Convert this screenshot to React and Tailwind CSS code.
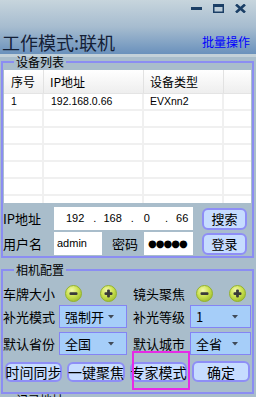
import React from 'react'

const CJK = { fontFamily: '"Noto Sans CJK SC", "Noto Sans", sans-serif' }

function RoundBtn({ plus }) {
  return (
    <svg width="17" height="17" viewBox="0 0 17 17" className="shrink-0">
      <defs>
        <radialGradient id={plus ? 'gp' : 'gm'} cx="0.4" cy="0.3" r="0.75">
          <stop offset="0" stopColor="#f3f8b0" />
          <stop offset="0.5" stopColor="#cde352" />
          <stop offset="1" stopColor="#9cbc2c" />
        </radialGradient>
      </defs>
      <circle cx="8.5" cy="8.5" r="8" fill={`url(#${plus ? 'gp' : 'gm'})`} stroke="#93b132" strokeWidth="1" />
      <rect x="4.5" y="7.2" width="8" height="2.8" rx="1" fill="#3a3a3a" />
      {plus && <rect x="7.1" y="4.6" width="2.8" height="8" rx="1" fill="#3a3a3a" />}
    </svg>
  )
}

function Select({ value, w }) {
  return (
    <div className={`${w} h-[23px] shrink-0 flex items-center justify-between bg-[#a6cef9] border border-[#8484f4] pl-[5px] pr-[12px]`}>
      <span className="text-[13px] text-black leading-none">{value}</span>
      <svg width="6" height="4" viewBox="0 0 6 4"><path d="M0 0h6L3 3.5z" fill="#404a58" /></svg>
    </div>
  )
}

function Btn({ children, w, h = 'h-[20px]', size = 'text-[14px]' }) {
  return (
    <div className={`${w} ${h} ${size} shrink-0 flex items-center justify-center rounded-[6px] border-2 border-[#8e8ef6] bg-[#c6dcff] text-black leading-none whitespace-nowrap overflow-visible`}>
      {children}
    </div>
  )
}

export default function App() {
  const rows = [['1', '192.168.0.66', 'EVXnn2'], ['', '', ''], ['', '', ''], ['', '', ''], ['', '', ''], ['', '', ''], ['', '', '']]
  return (
    <div className="w-[256px] h-[397px] overflow-hidden bg-[#a9bdcb] text-black" style={CJK}>
      {/* Title bar */}
      <div className="h-[54px] bg-gradient-to-b from-[#c7d5dd] via-[#a6bccf] to-[#6a91bc] flex flex-col justify-between">
        <div className="flex justify-end items-start pt-[4px] pr-[10px] gap-[11px]">
          <svg width="11" height="9" viewBox="0 0 11 9"><rect x="0" y="3" width="11" height="3" fill="#1b3f66" /></svg>
          <svg width="11" height="9" viewBox="0 0 11 9"><rect x="0.75" y="0.75" width="9.5" height="7.5" fill="none" stroke="#1b3f66" strokeWidth="1.5" /><rect x="0" y="0" width="11" height="3" fill="#1b3f66" /></svg>
          <svg width="11" height="9" viewBox="0 0 11 9"><path d="M1 0.5L10 8.5M10 0.5L1 8.5" stroke="#1b3f66" strokeWidth="2.6" /></svg>
        </div>
        <div className="flex items-end justify-between pl-[2px] pr-[6px] pb-[2px]">
          <span className="text-[18px] leading-[20px] text-[#142036]">工作模式:联机</span>
          <span className="text-[12px] leading-[16px] text-[#0000ff] mb-[2px]">批量操作</span>
        </div>
      </div>
      <div className="h-[3px] bg-[#c3d1d9]" />

      {/* 设备列表 */}
      <fieldset className="ml-[1px] w-[253px] border-2 border-[#8b8df2] pb-[1px]">
        <legend className="ml-[11px] px-[2px] text-[12px] leading-[10px]">设备列表</legend>
        <div className="mt-[3px] mx-[1px] h-[133px] bg-white overflow-hidden">
          <div className="flex h-[24px] bg-gradient-to-b from-white to-[#eeeeee] border-b border-[#e4e4e4] text-[12px] items-center">
            <div className="w-[40px] h-full flex items-center pl-[7px] border-r border-[#e2e2e2]">序号</div>
            <div className="w-[100px] h-full flex items-center pl-[6px] border-r border-[#e2e2e2]">IP地址</div>
            <div className="w-[80px] h-full flex items-center pl-[6px] border-r border-[#e2e2e2]">设备类型</div>
            <div className="flex-1 h-full" />
          </div>
          {rows.map((r, i) => (
            <div key={i} className="flex h-[17px] border-b-2 border-[#f0f0f0] text-[10.5px] items-center" style={{ fontFamily: '"Liberation Sans", sans-serif' }}>
              <div className="w-[40px] h-full flex items-center pl-[7px] border-r-2 border-[#f0f0f0]">{r[0]}</div>
              <div className="w-[100px] h-full flex items-center pl-[7px] border-r-2 border-[#f0f0f0]">{r[1]}</div>
              <div className="w-[80px] h-full flex items-center pl-[6px] border-r-2 border-[#f0f0f0]">{r[2]}</div>
              <div className="w-[22px] h-full" />
            </div>
          ))}
        </div>

        <div className="flex items-center mt-[4px] h-[23px]">
          <span className="w-[51px] text-[13px] leading-none">IP地址</span>
          <div className="w-[139px] h-[23px] bg-white flex items-center text-[11px] leading-none" style={{ fontFamily: '"Liberation Sans", sans-serif' }}>
            <span className="ml-[12px]">192</span>
            <span className="ml-[9px]">.</span>
            <span className="ml-[7px]">168</span>
            <span className="ml-[9px]">.</span>
            <span className="ml-[10px]">0</span>
            <span className="ml-[15px]">.</span>
            <span className="ml-[8px]">66</span>
          </div>
          <div className="ml-[9px]"><Btn w="w-[45px]" h="h-[22px]" size="text-[13px]">搜索</Btn></div>
        </div>
        <div className="flex items-center mt-[2px] h-[23px]">
          <span className="w-[51px] text-[13px] leading-none">用户名</span>
          <div className="w-[48px] h-[23px] bg-white flex items-center pl-[3px] text-[11px] leading-none" style={{ fontFamily: '"Liberation Sans", sans-serif' }}>admin</div>
          <span className="ml-[10px] w-[32px] text-[13px] leading-none">密码</span>
          <div className="w-[49px] h-[23px] bg-white flex items-center pl-[4px] text-[10px] tracking-[-1px] leading-none" style={{ fontFamily: '"DejaVu Sans", sans-serif' }}>●●●●●</div>
          <div className="ml-[9px]"><Btn w="w-[45px]" h="h-[22px]" size="text-[13px]">登录</Btn></div>
        </div>
      </fieldset>

      {/* 相机配置 */}
      <fieldset className="mt-[7px] ml-[1px] w-[253px] border-2 border-[#8b8df2] pb-[10px]">
        <legend className="ml-[11px] px-[2px] text-[12px] leading-[10px]">相机配置</legend>
        <div className="flex items-center mt-[10px] h-[17px] text-[13px] leading-none">
          <span className="w-[62px]">车牌大小</span>
          <RoundBtn />
          <span className="ml-[18px] flex"><RoundBtn plus /></span>
          <span className="ml-[16px] w-[63px]">镜头聚焦</span>
          <RoundBtn />
          <span className="ml-[16px] flex"><RoundBtn plus /></span>
        </div>
        <div className="flex items-center mt-[3px] text-[13px] leading-none">
          <span className="w-[56px]">补光模式</span>
          <Select value="强制开" w="w-[68px]" />
          <span className="ml-[6px] w-[57px]">补光等级</span>
          <Select value="1" w="w-[61px]" />
        </div>
        <div className="flex items-center mt-[4px] text-[13px] leading-none">
          <span className="w-[56px]">默认省份</span>
          <Select value="全国" w="w-[68px]" />
          <span className="ml-[6px] w-[57px]">默认城市</span>
          <Select value="全省" w="w-[61px]" />
        </div>
        <div className="flex items-center mt-[6px] pl-[2px] gap-[5px]">
          <Btn w="w-[57px]">时间同步</Btn>
          <Btn w="w-[58px]">一键聚焦</Btn>
          <div className="relative">
            <Btn w="w-[57px]">专家模式</Btn>
            <div className="absolute left-[2px] top-[-11px] w-[58px] h-[39px] border-2 border-[#e62ae6]" />
          </div>
          <Btn w="w-[58px]" h="h-[21px]">确定</Btn>
        </div>
      </fieldset>

      <fieldset className="mt-[1px] ml-[1px] w-[253px] border-2 border-[#8b8df2] h-[40px]">
        <legend className="ml-[11px] px-[2px] text-[12px] leading-[10px]">记录地址</legend>
      </fieldset>
    </div>
  )
}
